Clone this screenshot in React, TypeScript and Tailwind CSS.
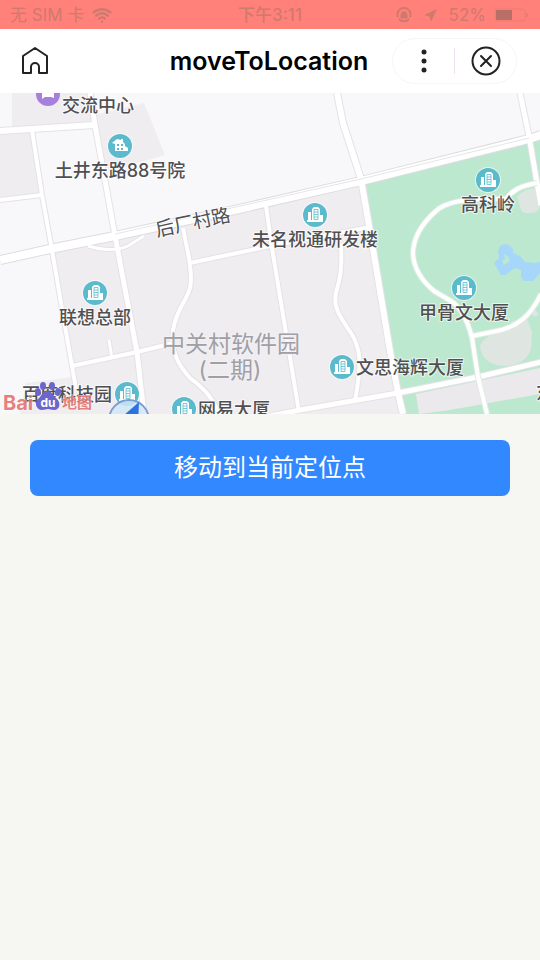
import { Navigation, Wifi } from 'lucide-react';

type PinKind = 'office' | 'house';

interface Poi {
  name: string;
  x: number;
  y: number;
  kind: PinKind;
  labelX: number;
  labelY: number;
  anchor?: 'start' | 'middle';
}

const POIS: Poi[] = [
  { name: '土井东路88号院', x: 120, y: 53, kind: 'house', labelX: 120, labelY: 84 },
  { name: '未名视通研发楼', x: 315, y: 122, kind: 'office', labelX: 315, labelY: 153 },
  { name: '高科岭', x: 488, y: 87, kind: 'office', labelX: 488, labelY: 118 },
  { name: '联想总部', x: 95, y: 200, kind: 'office', labelX: 95, labelY: 231 },
  { name: '甲骨文大厦', x: 464, y: 195, kind: 'office', labelX: 464, labelY: 226 },
  { name: '文思海辉大厦', x: 342, y: 274, kind: 'office', labelX: 356, labelY: 281, anchor: 'start' },
  { name: '百度科技园', x: 127, y: 301, kind: 'office', labelX: 22, labelY: 308, anchor: 'start' },
  { name: '网易大厦', x: 184, y: 316, kind: 'office', labelX: 198, labelY: 323, anchor: 'start' },
];

const BLOCKS = [
  'M12 0H89L93 29L12 35Z',
  'M0 40L31 38L41 101L0 105Z',
  'M94 22L144 10L165 62L110 78L102 70Z',
  'M53 158L361 88L402 321H20L26 290L73 284Z',
];

const MAIN_ROAD = 'M0 167L50 156L115 143L230 118L361 88L529 46L541 42';

const ROADS: { d: string; width: number }[] = [
  { d: 'M0 38L94 32', width: 6 },
  { d: 'M0 107L42 102', width: 4 },
  { d: 'M32 37L42 102L52 157L63 222L72 273L76 296', width: 4 },
  { d: 'M90 0L95 32L115 143L137 259L144 321', width: 5 },
  { d: 'M88 153Q112 160 128 153L144 143', width: 3 },
  { d: 'M337 0L343 30L361 86L372 150L390 258L398 300L403 321', width: 6 },
  { d: 'M520 0L529 43L537 90L541 112', width: 5 },
  { d: 'M266 113L272 155L299 319', width: 4 },
  { d: 'M190 170L270 153L371 134', width: 4 },
  { d: 'M183 135L189 165C194 198 189 198 180 216C165 246 174 268 190 285C203 295 212 303 219 321', width: 4 },
  { d: 'M341 150C342 174 341 181 337 196C331 213 341 225 351 240C361 256 362 270 355 308', width: 4 },
  { d: 'M72 273L137 259L174 250', width: 4 },
  { d: 'M112 266L109 247', width: 3 },
  { d: 'M270 323L300 317L398 300L478 284L541 269', width: 5 },
];

const PARK_ROADS =
  'M537 90C519 93 512 98 506 106C480 105 448 106 436 118C419 133 413 148 413 161C414 177 422 188 434 198L451 208C462 215 468 229 472 245L478 284L487 321M472 243L492 239C518 235 531 222 541 201';

function OfficeGlyph() {
  return (
    <g fill="white">
      <path d="M-7 -3H-4V6H-7ZM-3 -6L-1 -8H3L5 -6V6H-3ZM5 0H8V6H5ZM-8 5H8V7H-8Z" />
      <path d="M-1 -5.5H3V4.5H-1ZM-1 -3H3M-1 -0.5H3M-1 2H3" stroke="#5bbbcc" strokeWidth="0.8" fill="none" />
    </g>
  );
}

function HouseGlyph() {
  return (
    <g>
      <path d="M-8 -3L-3 -7L1 -6V-7H3V-4L5 -2V0L8 2V5H-5V-2Z" fill="white" />
      <path d="M-3 -2H-1V0H-3ZM1 -2H3V0H1ZM-3 2H-1V4H-3ZM1 2H3V4H1Z" fill="#5bbbcc" />
    </g>
  );
}

function PoiPin({ poi }: { poi: Poi }) {
  return (
    <g transform={`translate(${poi.x} ${poi.y})`}>
      <circle r="13" fill="white" opacity="0.6" />
      <circle r="12" fill="#5bbbcc" />
      {poi.kind === 'house' ? <HouseGlyph /> : <OfficeGlyph />}
    </g>
  );
}

function BaiduLogo() {
  return (
    <g>
      <g fill="#e4706f" fillOpacity="0.9" stroke="white" strokeOpacity="0.6" strokeWidth="1" paintOrder="stroke" fontWeight="700">
        <text x="3" y="317" className="text-[20px]">Bai</text>
        <text x="62" y="315" className="text-[15px]">地图</text>
      </g>
      <g fill="#6c66cc">
        <ellipse cx="38" cy="299" rx="3" ry="4" transform="rotate(-15 38 299)" />
        <ellipse cx="43" cy="293" rx="3" ry="4" />
        <ellipse cx="52" cy="293" rx="3" ry="4" />
        <ellipse cx="58" cy="299" rx="3" ry="4" transform="rotate(15 58 299)" />
        <path d="M47 298C42 298 42 303 38 306C34 309 36 317 42 317C45 317 46 316 48 316C50 316 51 317 54 317C60 317 61 310 57 306C53 303 53 298 47 298Z" />
      </g>
      <text x="48" y="314" textAnchor="middle" fill="white" fontWeight="700" className="text-[12px]">
        du
      </text>
    </g>
  );
}

function CampusMap() {
  return (
    <svg
      viewBox="0 0 540 321"
      className="block h-auto w-full bg-[#f8f7fa]"
      role="img"
      aria-label="地图"
      fill="none"
    >
      {BLOCKS.map((d) => (
        <path key={d} d={d} fill="#efedf0" />
      ))}
      <path d="M363 88L540 44V321H402Z" fill="#bce8cf" />
      <path d="M416 301L540 275V301L450 317L419 321Z" fill="#ebe9eb" />
      <path d="M517 104Q523 96 536 95L540 113Q538 120 532 120H526Q520 119 520 112Z" fill="#dfe5e1" />
      <path d="M480 253Q485 241 505 239L512 236L511 229L526 223L532 239L531 256Q526 271 507 273Q482 273 480 253Z" fill="#dfe5e1" />
      <path d="M530 219L534 216L539 221L535 224Z" fill="#dfe5e1" />
      <path
        fillRule="evenodd"
        d="M498 159L500 153Q504 150 509 152L513 156V160L520 163L525 169L535 170L540 169V180L533 188H524L521 184V177L515 175L509 179L506 182H501L494 170L499 165ZM504 161L508 163L510 168L504 172L502 168L505 166Z"
        fill="#a6d6fa"
      />

      {ROADS.map((road) => (
        <path key={road.d} d={road.d} stroke="#e4e2e5" strokeWidth={road.width + 2} strokeLinejoin="round" />
      ))}
      <path d={MAIN_ROAD} stroke="#dedcdf" strokeWidth="10" />
      {ROADS.map((road) => (
        <path key={road.d} d={road.d} stroke="white" strokeWidth={road.width} strokeLinejoin="round" />
      ))}
      <path d={PARK_ROADS} stroke="#dfece3" strokeWidth="6" />
      <path d={PARK_ROADS} stroke="white" strokeWidth="4" />
      <path d={MAIN_ROAD} stroke="white" strokeWidth="8" />
      <path d="M115 141L361 86L529 45" stroke="#e6e4e7" strokeWidth="1" />

      <circle cx="48" cy="1" r="12" fill="#a77fdc" />
      <path d="M42 -4H54V5L51 4H45L42 6Z" fill="white" />

      <g fill="#a09fa6" stroke="#f3f1f4" strokeWidth="2" paintOrder="stroke" textAnchor="middle" className="text-[23px]">
        <text x="231" y="259">中关村软件园</text>
        <text x="230" y="285">(二期)</text>
      </g>

      {POIS.map((poi) => (
        <PoiPin key={poi.name} poi={poi} />
      ))}

      <g
        fill="#505053"
        stroke="white"
        strokeOpacity="0.7"
        strokeWidth="2"
        strokeLinejoin="round"
        paintOrder="stroke"
        className="text-[18px] font-medium"
      >
        <text x="62" y="19">交流中心</text>
        <text x="193" y="136" textAnchor="middle" transform="rotate(-12 193 130)" className="text-[19px] font-normal">
          后厂村路
        </text>
        {POIS.map((poi) => (
          <text key={poi.name} x={poi.labelX} y={poi.labelY} textAnchor={poi.anchor ?? 'middle'}>
            {poi.name}
          </text>
        ))}
        <text x="536" y="306">东</text>
      </g>

      <BaiduLogo />

      <g>
        <circle cx="129" cy="327" r="20" fill="#cfe6f7" fillOpacity="0.85" stroke="#7f9cd3" strokeWidth="2" />
        <path d="M139 309L123 323L131 327L138 330Z" fill="#2c73e0" />
      </g>
    </svg>
  );
}

function StatusBar() {
  return (
    <div className="grid h-[29px] grid-cols-3 items-center bg-[#ff8179] px-[10px] pt-px text-[17px] leading-none text-[#d0796f]">
      <div className="flex items-center gap-2">
        <span>无 SIM 卡</span>
        <Wifi size={20} strokeWidth={3} />
      </div>
      <span className="text-center font-medium">下午3:11</span>
      <div className="flex items-center justify-end gap-2">
        <svg width="16" height="16" viewBox="0 0 16 16" fill="none" stroke="currentColor" strokeWidth="2">
          <path d="M2 10A6.5 6.5 0 1 1 14 10M3 12A6.5 6.5 0 0 0 13 12" />
          <path d="M5 7H11V11H5ZM6 7V5H10V7" fill="currentColor" strokeWidth="1" />
        </svg>
        <Navigation size={13} fill="currentColor" className="mx-1" />
        <span>52%</span>
        <svg width="36" height="14" viewBox="0 0 36 14" fill="none">
          <rect x="1" y="1" width="30" height="12" rx="2" stroke="currentColor" strokeOpacity="0.4" />
          <rect x="2" y="2" width="16" height="10" rx="1" fill="#b96f67" />
          <path d="M33 5V9" stroke="currentColor" strokeOpacity="0.5" strokeWidth="2" />
        </svg>
      </div>
    </div>
  );
}

function NavBar() {
  return (
    <header className="grid h-16 grid-cols-[1fr_auto_1fr] items-center bg-white pr-[23px] pl-[21px]">
      <button type="button" aria-label="首页" className="justify-self-start">
        <svg width="28" height="28" viewBox="0 0 28 28" fill="none" stroke="#222" strokeWidth="2" strokeLinejoin="round">
          <path d="M2 9L14 1L26 9V26H18V20A4 4 0 0 0 10 20V26H2Z" />
        </svg>
      </button>
      <h1 className="text-[25px] leading-8 font-semibold text-black">moveToLocation</h1>
      <div className="flex h-[46px] w-[125px] items-center justify-self-end rounded-full border border-[#f9f3fa]">
        <button type="button" aria-label="更多" className="flex flex-1 justify-center">
          <svg width="6" height="24" viewBox="0 0 6 24" fill="#222">
            <circle cx="3" cy="3" r="2.5" />
            <circle cx="3" cy="12" r="2.5" />
            <circle cx="3" cy="21" r="2.5" />
          </svg>
        </button>
        <span className="h-[26px] w-px bg-[#eee3ee]" />
        <button type="button" aria-label="关闭" className="flex flex-1 justify-center">
          <svg width="30" height="30" viewBox="0 0 30 30" fill="none" stroke="#222" strokeWidth="2" strokeLinecap="round">
            <circle cx="15" cy="15" r="13.5" />
            <path d="M10 10L20 20M20 10L10 20" />
          </svg>
        </button>
      </div>
    </header>
  );
}

export default function App() {
  return (
    <div className="min-h-screen bg-[#f6f7f3] font-[Inter,'Noto_Sans_CJK_SC',sans-serif]">
      <StatusBar />
      <NavBar />
      <main>
        <CampusMap />
        <div className="px-[30px] pt-[26px]">
          <button type="button" className="h-14 w-full rounded-lg bg-[#3288ff] text-[24px] leading-8 text-white">
            移动到当前定位点
          </button>
        </div>
      </main>
    </div>
  );
}
